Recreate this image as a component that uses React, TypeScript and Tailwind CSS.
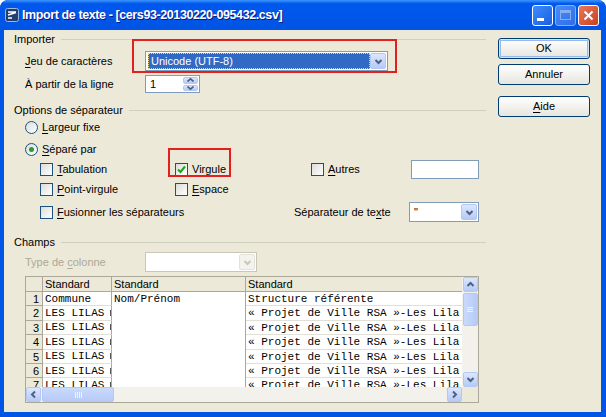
import React from 'react';

type Dir = 'down' | 'up' | 'left' | 'right';

function Chevron({ dir = 'down', color = '#4D6185' }: { dir?: Dir; color?: string }) {
  const d = {
    down: 'M1.5 3 L4.5 6 L7.5 3',
    up: 'M1.5 6 L4.5 3 L7.5 6',
    left: 'M6 1.5 L3 4.5 L6 7.5',
    right: 'M3 1.5 L6 4.5 L3 7.5',
  }[dir];
  return (
    <svg width="9" height="9" viewBox="0 0 9 9">
      <path d={d} fill="none" stroke={color} strokeWidth="2" />
    </svg>
  );
}

function ArrowBtn({ dir, className = '' }: { dir: Dir; className?: string }) {
  return (
    <div
      className={`shrink-0 rounded-[2px] border border-[#B5C8F4] bg-linear-to-b from-[#DCE7FE] to-[#B6CAF6] flex items-center justify-center ${className}`}
    >
      <Chevron dir={dir} />
    </div>
  );
}

function U({ children }: { children: React.ReactNode }) {
  return <span className="underline underline-offset-2">{children}</span>;
}

function GroupHeader({ label }: { label: string }) {
  return (
    <div className="flex items-center h-[13px]">
      <span>{label}</span>
      <div className="flex-1 ml-[6px] border-t border-[#D0D0BF]" />
    </div>
  );
}

function Check({ checked = false }: { checked?: boolean }) {
  return (
    <div className="w-[13px] h-[13px] shrink-0 border border-[#1C5180] bg-linear-to-br from-[#DCDCD7] to-white flex items-center justify-center">
      {checked && (
        <svg width="9" height="9" viewBox="0 0 9 9">
          <path d="M1 4.5 L3.5 7 L8 1.5" fill="none" stroke="#21A121" strokeWidth="2" />
        </svg>
      )}
    </div>
  );
}

function Radio({ checked = false }: { checked?: boolean }) {
  return (
    <div className="w-[13px] h-[13px] shrink-0 rounded-full border border-[#1C5180] bg-linear-to-br from-[#DCDCD7] to-white flex items-center justify-center">
      {checked && <div className="w-[5px] h-[5px] rounded-full bg-[#2C9A2C]" />}
    </div>
  );
}

function CheckItem({ children, checked, className = '' }: { children: React.ReactNode; checked?: boolean; className?: string }) {
  return (
    <div className={`flex items-center gap-[4px] ${className}`}>
      <Check checked={checked} />
      <span>{children}</span>
    </div>
  );
}

function Combo({ className = '', children, disabled = false }: { className?: string; children?: React.ReactNode; disabled?: boolean }) {
  return (
    <div
      className={`h-[20px] flex items-stretch p-[1px] border bg-white ${disabled ? 'border-[#C9C7BA]' : 'border-[#7F9DB9]'} ${className}`}
    >
      <div className="flex-1 flex items-center overflow-hidden">{children}</div>
      {disabled ? (
        <div className="w-[16px] rounded-[2px] border border-[#E3E2DA] bg-[#F4F3EE] flex items-center justify-center">
          <Chevron color="#C9C7BA" />
        </div>
      ) : (
        <ArrowBtn dir="down" className="w-[16px]" />
      )}
    </div>
  );
}

function XpButton({ children, def = false }: { children: React.ReactNode; def?: boolean }) {
  return (
    <div
      className={`w-[92px] h-[21px] rounded-[3px] border border-[#003C74] bg-linear-to-b from-white to-[#E6E5DE] flex items-center justify-center ${
        def ? 'shadow-[inset_0_0_0_1px_#CEE7FF,inset_0_0_0_2px_#98B8EA]' : ''
      }`}
    >
      {children}
    </div>
  );
}

const rows: [string, string, string][] = [
  ['Commune', 'Nom/Prénom', 'Structure référente'],
  ['LES LILAS', '', '« Projet de Ville RSA »-Les Lila'],
  ['LES LILAS', '', '« Projet de Ville RSA »-Les Lila'],
  ['LES LILAS', '', '« Projet de Ville RSA »-Les Lila'],
  ['LES LILAS', '', '« Projet de Ville RSA »-Les Lila'],
  ['LES LILAS', '', '« Projet de Ville RSA »-Les Lila'],
  ['LES LILAS', '', '« Projet de Ville RSA »-Les Lila'],
];

function DataTable() {
  return (
    <div className="ml-[11px] w-[454px] h-[127px] border border-[#ACA899] bg-white flex flex-col">
      <div className="flex h-[110px]">
        <div className="w-[436px] overflow-hidden">
          <div className="flex h-[15px] bg-[#ECE9D8] border-b border-[#ACA899]">
            <div className="w-[17px] border-r border-[#ACA899]" />
            <div className="w-[69px] border-r border-[#ACA899] pl-[2px] leading-[14px]">Standard</div>
            <div className="w-[134px] border-r border-[#ACA899] pl-[2px] leading-[14px]">Standard</div>
            <div className="flex-1 pl-[2px] leading-[14px]">Standard</div>
          </div>
          {rows.map((r, i) => (
            <div key={i} className="flex h-[14.4px]">
              <div className="w-[17px] shrink-0 bg-[#ECE9D8] border-r border-b border-[#ACA899] text-right pr-[3px] leading-[14px]">
                {i + 1}
              </div>
              <div className="w-[69px] shrink-0 flex items-center justify-between whitespace-pre border-r border-b border-r-[#ACA899] border-b-[#E2E0D6] pl-[2px] leading-[14px] font-['Liberation_Mono',monospace]">
                <span>{r[0]}</span>
                {i > 0 && <span className="w-px h-[6px] bg-[#555]" />}
              </div>
              <div className="w-[134px] shrink-0 whitespace-pre border-r border-[#ACA899] pl-[2px] leading-[14px] font-['Liberation_Mono',monospace]">
                {r[1]}
              </div>
              <div className="flex-1 whitespace-pre border-b border-[#E2E0D6] pl-[2px] leading-[14px] font-['Liberation_Mono',monospace]">
                {r[2]}
              </div>
            </div>
          ))}
        </div>
        <div className="w-[16px] flex flex-col bg-[#F3F1EC] px-[0.5px]">
          <ArrowBtn dir="up" className="h-[15px]" />
          <div className="h-[33px] mt-[1px] rounded-[2px] border border-[#B5C8F4] bg-linear-to-r from-[#C9DAFC] to-[#B6CAF6] flex flex-col items-center justify-center gap-[1px]">
            <div className="w-[6px] h-px bg-[#EEF4FE]" />
            <div className="w-[6px] h-px bg-[#EEF4FE]" />
            <div className="w-[6px] h-px bg-[#EEF4FE]" />
          </div>
          <div className="flex-1" />
          <ArrowBtn dir="down" className="h-[15px]" />
        </div>
      </div>
      <div className="flex h-[15px]">
        <div className="w-[436px] flex bg-[#F3F1EC]">
          <ArrowBtn dir="left" className="w-[15px]" />
          <div className="w-[72px] ml-px rounded-[2px] border border-[#B5C8F4] bg-linear-to-b from-[#C9DAFC] to-[#B6CAF6] flex items-center justify-center gap-[1px]">
            <div className="w-px h-[6px] bg-[#EEF4FE]" />
            <div className="w-px h-[6px] bg-[#EEF4FE]" />
            <div className="w-px h-[6px] bg-[#EEF4FE]" />
            <div className="w-px h-[6px] bg-[#EEF4FE]" />
          </div>
          <div className="flex-1" />
          <ArrowBtn dir="right" className="w-[15px]" />
        </div>
        <div className="flex-1 bg-[#ECE9D8]" />
      </div>
    </div>
  );
}

function TitleBar() {
  return (
    <div className="h-[30px] shrink-0 rounded-t-[8px] bg-linear-to-b from-[#3D95FF] via-[#0058EE] via-[12%] to-[#0054E3] flex items-center pl-[5px] pr-[7px]">
      <svg width="14" height="14" viewBox="0 0 14 14" className="shrink-0">
        <rect x="0.5" y="0.5" width="13" height="13" rx="2" fill="#22406E" stroke="#9FB6D8" />
        <path d="M3 4 H11 M3 7 L11 4.5 M3 10 H7" stroke="#FFFFFF" strokeWidth="1.4" fill="none" />
      </svg>
      <span className="ml-[3px] text-white font-bold text-[12.5px] tracking-[-0.4px] font-['Liberation_Sans',Arial,sans-serif] [text-shadow:1px_1px_0_#0A1883]">
        Import de texte - [cers93-20130220-095432.csv]
      </span>
      <div className="flex-1" />
      <div className="flex gap-[2px]">
        <div className="w-[21px] h-[21px] rounded-[3px] border border-white bg-linear-to-br from-[#3C8CFF] to-[#1C5FE0] flex items-end pl-[4px] pb-[4px]">
          <div className="w-[7px] h-[3px] bg-white" />
        </div>
        <div className="w-[21px] h-[21px] rounded-[3px] border border-[#A9C4F5] bg-linear-to-br from-[#5A9BFF] to-[#3B74E8] flex items-center justify-center opacity-80">
          <div className="w-[11px] h-[10px] border border-[#A9C4F5] border-t-[3px]" />
        </div>
        <div className="w-[21px] h-[21px] rounded-[3px] border border-white bg-linear-to-br from-[#E8785A] to-[#C9401C] flex items-center justify-center">
          <svg width="11" height="11" viewBox="0 0 11 11">
            <path d="M1.5 1.5 L9.5 9.5 M9.5 1.5 L1.5 9.5" stroke="#FFFFFF" strokeWidth="2" />
          </svg>
        </div>
      </div>
    </div>
  );
}

export default function App() {
  return (
    <div className="relative w-[606px] h-[417px] flex flex-col bg-[#0055E5] rounded-t-[8px] overflow-hidden text-[11px] text-black font-['Liberation_Sans',Arial,sans-serif]">
      <TitleBar />
      <div className="flex-1 ml-[4px] mr-[5px] mb-[5px] bg-[#ECE9D8] flex">
        <div className="w-[482px] pl-[10px] flex flex-col">
          <div className="mt-[3px]">
            <GroupHeader label="Importer" />
          </div>
          <div className="mt-[5px] h-[20px] pl-[11px] flex items-center">
            <span className="w-[120px]">
              <U>J</U>eu de caractères
            </span>
            <Combo className="w-[243px]">
              <div className="h-full flex-1 ml-[1px] bg-[#316AC5] border border-dotted border-[#E8D38A] flex items-center pl-[2px] text-white">
                Unicode (UTF-8)
              </div>
            </Combo>
          </div>
          <div className="mt-[4px] h-[18px] pl-[11px] flex items-center">
            <span className="w-[120px]">À partir de la ligne</span>
            <div className="w-[55px] h-[18px] border border-[#7F9DB9] bg-white flex p-[1px]">
              <span className="flex-1 pl-[3px] leading-[14px]">1</span>
              <div className="w-[15px] flex flex-col gap-px">
                <div className="flex-1 rounded-[2px] border border-[#B5C8F4] bg-linear-to-b from-[#DCE7FE] to-[#B6CAF6] flex items-center justify-center">
                  <svg width="7" height="4" viewBox="0 0 7 4">
                    <path d="M0.5 3.5 L3.5 0.8 L6.5 3.5" fill="none" stroke="#4D6185" strokeWidth="1.6" />
                  </svg>
                </div>
                <div className="flex-1 rounded-[2px] border border-[#B5C8F4] bg-linear-to-b from-[#DCE7FE] to-[#B6CAF6] flex items-center justify-center">
                  <svg width="7" height="4" viewBox="0 0 7 4">
                    <path d="M0.5 0.5 L3.5 3.2 L6.5 0.5" fill="none" stroke="#4D6185" strokeWidth="1.6" />
                  </svg>
                </div>
              </div>
            </div>
          </div>

          <div className="mt-[11px]">
            <GroupHeader label="Options de séparateur" />
          </div>
          <div className="mt-[3px] h-[14px] pl-[11px] flex items-center gap-[4px]">
            <Radio />
            <span>
              <U>L</U>argeur fixe
            </span>
          </div>
          <div className="mt-[8px] h-[14px] pl-[11px] flex items-center gap-[4px]">
            <Radio checked />
            <span>
              <U>S</U>éparé par
            </span>
          </div>
          <div className="mt-[3px] h-[20px] pl-[26px] flex items-center">
            <CheckItem className="w-[135px]">
              <U>T</U>abulation
            </CheckItem>
            <CheckItem className="w-[136px]" checked>
              <U>V</U>irgule
            </CheckItem>
            <CheckItem className="w-[100px]">
              <U>A</U>utres
            </CheckItem>
            <div className="w-[68px] h-[19px] border border-[#7F9DB9] bg-white" />
          </div>
          <div className="mt-[3px] h-[14px] pl-[26px] flex items-center">
            <CheckItem className="w-[135px]">
              <U>P</U>oint-virgule
            </CheckItem>
            <CheckItem>
              <U>E</U>space
            </CheckItem>
          </div>
          <div className="mt-[6px] h-[20px] pl-[26px] flex items-center">
            <CheckItem className="w-[254px]">
              <U>F</U>usionner les séparateurs
            </CheckItem>
            <span className="w-[115px]">
              Séparateur de te<U>x</U>te
            </span>
            <Combo className="w-[70px]">
              <span className="pl-[3px]">"</span>
            </Combo>
          </div>

          <div className="mt-[14px]">
            <GroupHeader label="Champs" />
          </div>
          <div className="mt-[3px] h-[20px] pl-[11px] flex items-center">
            <span className="w-[120px] text-[#ACA899]">
              Type de <U>c</U>olonne
            </span>
            <Combo className="w-[112px]" disabled />
          </div>
          <div className="mt-[4px]">
            <DataTable />
          </div>
        </div>

        <div className="ml-[12px] pt-[8px] flex flex-col">
          <XpButton def>OK</XpButton>
          <div className="mt-[5px]">
            <XpButton>Annuler</XpButton>
          </div>
          <div className="mt-[11px]">
            <XpButton>
              <span>
                <U>A</U>ide
              </span>
            </XpButton>
          </div>
        </div>
      </div>

      <div className="absolute left-[132px] top-[39px] w-[265px] h-[34px] border-2 border-[#E3201E]" />
      <div className="absolute left-[168px] top-[148px] w-[63px] h-[29px] border-2 border-[#E3201E]" />
    </div>
  );
}
